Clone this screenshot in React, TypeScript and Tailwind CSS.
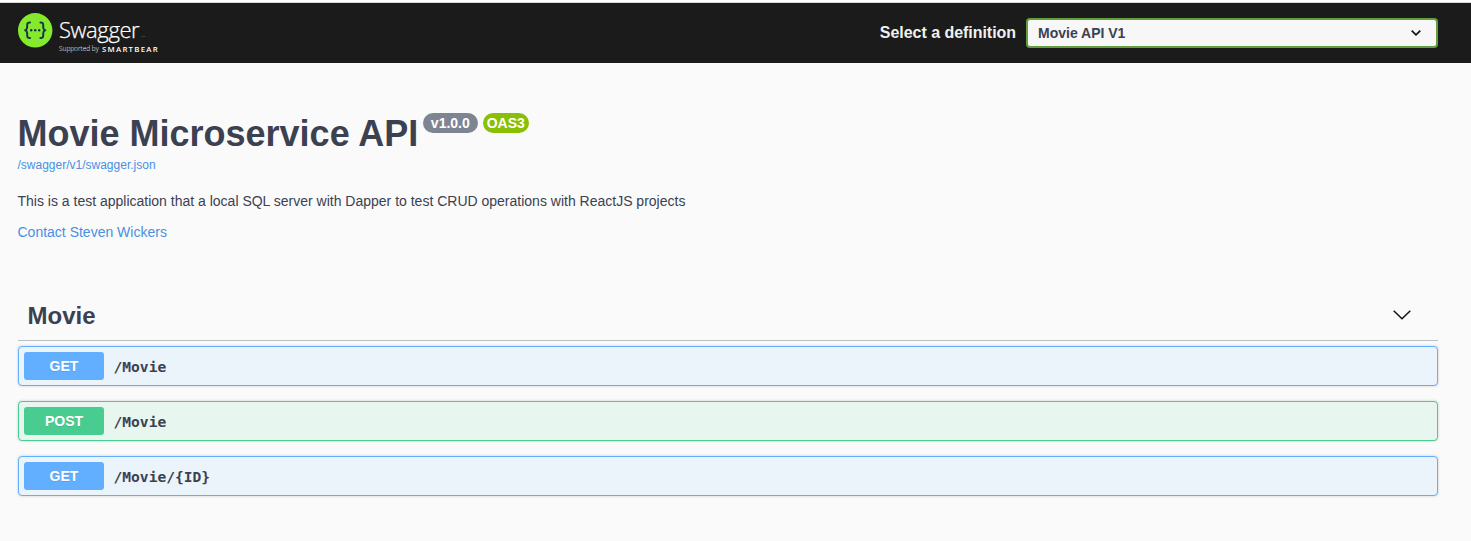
import React from 'react';

type Operation = { method: 'GET' | 'POST'; path: string };

const operations: Operation[] = [
  { method: 'GET', path: '/Movie' },
  { method: 'POST', path: '/Movie' },
  { method: 'GET', path: '/Movie/{ID}' },
];

const tones = {
  GET: { row: 'border-[#61affe] bg-[#ebf3fb]', badge: 'bg-[#61affe]' },
  POST: { row: 'border-[#49cc90] bg-[#e8f6f0]', badge: 'bg-[#49cc90]' },
};

function Logo() {
  return (
    <a className="flex items-start text-white">
      <svg width="36" height="36" viewBox="0 0 36 36" className="shrink-0">
        <circle cx="17.2" cy="17.3" r="17.2" fill="#85ea2d" />
        <g fill="none" stroke="#173647" strokeWidth="2" strokeLinecap="round" strokeLinejoin="round">
          <path d="M12 9.4c-2.4 0-2.9.8-2.8 3 .1 2.6.1 4.4-2.1 4.8 2.2.4 2.2 2.2 2.1 4.8-.1 2.2.4 3 2.8 3" />
          <path d="M22.4 9.4c2.4 0 2.9.8 2.8 3-.1 2.6-.1 4.4 2.1 4.8-2.2.4-2.2 2.2-2.1 4.8.1 2.2-.4 3-2.8 3" />
        </g>
        <g fill="#173647">
          <circle cx="13.2" cy="17.3" r="1.2" />
          <circle cx="17.2" cy="17.3" r="1.2" />
          <circle cx="21.2" cy="17.3" r="1.2" />
        </g>
      </svg>
      <span className="ml-[5px] mt-[2px] flex flex-col">
        <span className="flex h-[29px] items-start font-['Open_Sans',sans-serif] text-[22px] font-light leading-[28px] tracking-[-0.4px] [-webkit-text-stroke:0.25px_white]">
          Swagger
          <span className="ml-[2px] mt-[19px] text-[2.5px] leading-[4px] tracking-normal [-webkit-text-stroke:0]">TM</span>
        </span>
        <span className="flex h-[10px] items-center whitespace-nowrap font-['Open_Sans',sans-serif] leading-[10px]">
          <span className="w-[43px] text-[6.5px] font-light tracking-[0px]">Supported by</span>
          <span className="text-[7.8px] font-semibold tracking-[1.25px]">SMARTBEAR</span>
        </span>
      </span>
    </a>
  );
}

function Topbar() {
  return (
    <header className="flex h-[63px] items-start justify-between border-t-2 border-white bg-[#1b1b1b] pl-[18px] pr-[33px] shadow-[inset_0_1px_0_#d9d9d9]">
      <div className="pt-[11px]">
        <Logo />
      </div>
      <label className="flex items-center pt-[16px]">
        <span className="mr-[10px] text-[16px] font-bold leading-[30px] tracking-[-0.04px] text-[#f0f0f0]">Select a definition</span>
        <span className="flex h-[30px] w-[412px] items-center justify-between rounded-[4px] border-2 border-[#62a03f] bg-[#f7f7f7] pl-[10px] pr-[15px] text-[14px] font-bold text-[#3b4151]">
          Movie API V1
          <svg width="10" height="6" viewBox="0 0 10 6" fill="none" stroke="#111" strokeWidth="1.7">
            <path d="M.7.7 5 4.8 9.3.7" />
          </svg>
        </span>
      </label>
    </header>
  );
}

function OperationRow({ method, path }: Operation) {
  const tone = tones[method];
  return (
    <div className={`flex h-[40px] items-center rounded-[4px] border px-[5px] shadow-[0_0_3px_rgba(0,0,0,0.19)] ${tone.row}`}>
      <span
        className={`h-[28px] w-[80px] rounded-[3px] text-center text-[14px] font-bold leading-[28px] text-white [text-shadow:0_1px_0_rgba(0,0,0,0.1)] ${tone.badge}`}
      >
        {method}
      </span>
      <span className="px-[9.5px] pt-[1px] font-['DejaVu_Sans_Mono',monospace] text-[14.6px] font-bold leading-[20px] text-[#3b4151]">
        {path}
      </span>
    </div>
  );
}

export default function App() {
  return (
    <div className="h-[541px] overflow-hidden bg-[#fafafa] font-['Liberation_Sans',Arial,sans-serif] text-[#3b4151]">
      <Topbar />
      <main className="pl-[18px] pr-[33px]">
        <section className="-ml-[0.5px] pt-[50px]">
          <h1 className="flex h-[43px] items-start text-[36px] font-bold leading-[41px]">
            Movie Microservice API
            <span className="ml-[4.5px] h-[20px] rounded-full bg-[#7d8492] px-[8px] text-[14px] leading-[20px] text-white">v1.0.0</span>
            <span className="ml-[5px] h-[20px] w-[46px] rounded-full bg-[#89bf04] text-center text-[14px] leading-[20px] text-white">OAS3</span>
          </h1>
          <a className="block h-[18px] text-[12px] leading-[18px] text-[#4990e2]">/swagger/v1/swagger.json</a>
          <p className="mt-[17px] text-[14px] leading-[20px]">
            This is a test application that a local SQL server with Dapper to test CRUD operations with ReactJS projects
          </p>
          <a className="mt-[11px] block text-[14px] leading-[20px] text-[#4990e2]">Contact Steven Wickers</a>
        </section>
        <section className="mt-[49px]">
          <h2 className="flex h-[50px] items-center justify-between border-b border-[#bdbfc6] pl-[9.5px] pr-[26px] text-[24px] font-bold">
            Movie
            <svg width="20" height="12" viewBox="0 0 20 12" fill="none" stroke="#111" strokeWidth="1.5" className="-mt-[2px]">
              <path d="M1.7 1.8 10 9.8l8.3-8" />
            </svg>
          </h2>
          <div className="mt-[5px] flex flex-col gap-[15px]">
            {operations.map((op) => (
              <OperationRow key={op.method + op.path} {...op} />
            ))}
          </div>
        </section>
      </main>
    </div>
  );
}
